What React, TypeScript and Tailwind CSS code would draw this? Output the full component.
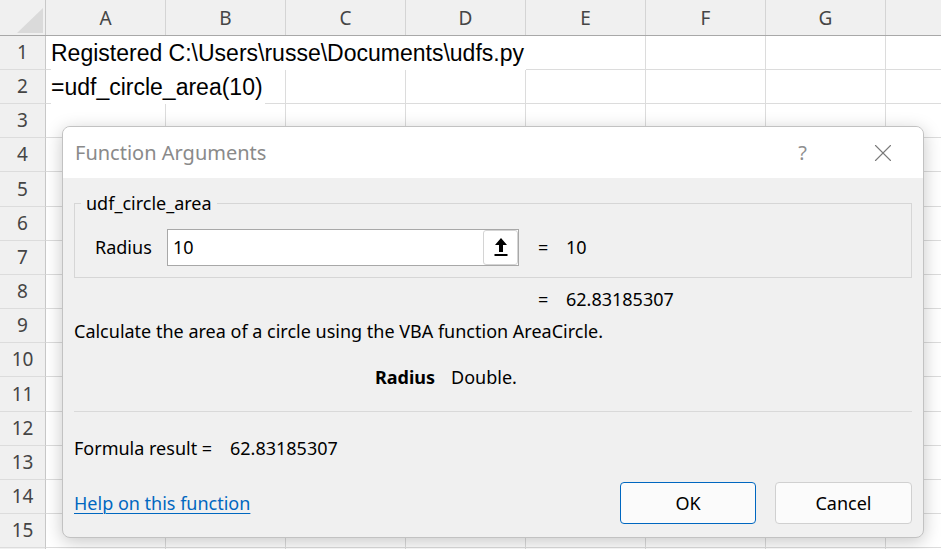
import { X } from 'lucide-react';

const COLS = ['A', 'B', 'C', 'D', 'E', 'F', 'G', ''];
const ROWS = Array.from({ length: 16 }, (_, i) => i + 1);

const CELLS: Record<number, string> = {
    1: 'Registered C:\\Users\\russe\\Documents\\udfs.py',
    2: '=udf_circle_area(10)',
};

function UploadIcon() {
    return (
        <svg width="14" height="19" viewBox="0 0 14 19">
            <path d="M7 0 L13 7 L9 7 L9 14 L5 14 L5 7 L1 7 Z" fill="#000" />
            <rect x="0.5" y="16" width="13" height="2" fill="#000" />
        </svg>
    );
}

function Sheet() {
    return (
        <div className="flex flex-col font-['Liberation_Sans',Arial,sans-serif]">
            {/* Column header */}
            <div className="flex h-[36px] bg-[#f0f0f0] border-b border-[#a8a8a8] shrink-0">
                <div className="w-[46px] shrink-0 border-r border-[#c8c8c8] relative">
                    <svg className="absolute left-0 top-0" width="46" height="36">
                        <polygon points="17,33 43,33 43,8" fill="#dadada" />
                    </svg>
                </div>
                {COLS.map((c, i) => (
                    <div
                        key={i}
                        className="w-[120px] shrink-0 border-r border-[#d4d4d4] flex items-center justify-center text-[19px] text-[#454545] font-['Noto_Sans',sans-serif] pt-[1px]"
                    >
                        {c}
                    </div>
                ))}
            </div>
            {ROWS.map(r => (
                <div key={r} className={`flex shrink-0 ${r === 5 || r === 11 ? 'h-[35px]' : 'h-[34px]'}`}>
                    <div className="w-[46px] shrink-0 bg-[#f0f0f0] border-r border-[#c8c8c8] border-b border-b-[#dcdcdc] flex items-center justify-center text-[19px] text-[#454545] font-['Noto_Sans',sans-serif]">
                        {r < 16 ? r : ''}
                    </div>
                    <div className="relative flex">
                        {COLS.map((c, i) => (
                            <div
                                key={i}
                                className={`w-[120px] shrink-0 border-b border-[#dcdcdc] ${i === 0 && CELLS[r] ? '' : 'border-r border-r-[#dcdcdc]'}`}
                            />
                        ))}
                        {CELLS[r] && (
                            <span className="absolute left-[5px] top-0 h-[34px] flex items-center whitespace-nowrap text-[23px] text-black bg-white pr-[2px]">
                                {CELLS[r]}
                            </span>
                        )}
                    </div>
                </div>
            ))}
        </div>
    );
}

function FunctionArguments() {
    return (
        <div className="absolute left-[62px] top-[126px] w-[862px] h-[412px] rounded-[8px] border border-[#c2c2c2] bg-[#f0f0f0] shadow-[0_4px_18px_rgba(0,0,0,0.22)] overflow-hidden flex flex-col font-['Noto_Sans',sans-serif] text-[18px] text-black">
            {/* Title bar */}
            <div className="h-[51px] bg-white flex items-center shrink-0">
                <span className="ml-[12px] text-[20px] text-[#8a8a8a]">Function Arguments</span>
                <span className="ml-auto text-[20px] text-[#8f8f8f] mr-[61px]">?</span>
                <X className="w-[30px] h-[30px] text-[#7a7a7a] mr-[25px]" strokeWidth={0.9} />
            </div>

            <div className="flex flex-col px-[11px]">
                {/* Group box */}
                <div className="relative mt-[25px] h-[75px] border border-[#d6d6d6] flex items-start pt-[25px]">
                    <span className="absolute left-[6px] -top-[13px] px-[5px] bg-[#f0f0f0] leading-[24px]">
                        udf_circle_area
                    </span>
                    <span className="w-[92px] pl-[20px] h-[37px] flex items-center">Radius</span>
                    <div className="w-[352px] h-[37px] border border-[#a8a8a8] bg-white flex items-center">
                        <span className="pl-[5px] flex-1">10</span>
                        <div className="w-[35px] h-[35px] rounded-[3px] border border-[#d4d4d4] bg-white flex items-center justify-center">
                            <UploadIcon />
                        </div>
                    </div>
                    <span className="ml-[19px] h-[37px] flex items-center w-[28px]">=</span>
                    <span className="h-[37px] flex items-center">10</span>
                </div>

                <div className="flex mt-[9px] leading-[24px] pl-[464px]">
                    <span className="w-[28px]">=</span>
                    <span>62.83185307</span>
                </div>

                <div className="mt-[8px] leading-[24px]">
                    Calculate the area of a circle using the VBA function AreaCircle.
                </div>

                <div className="mt-[22px] leading-[24px] pl-[301px] flex gap-[16px]">
                    <span className="font-bold">Radius</span>
                    <span>Double.</span>
                </div>

                <div className="mt-[22px] h-px bg-[#d9d9d9]" />

                <div className="mt-[24px] leading-[24px] flex">
                    <span className="w-[156px]">Formula result =</span>
                    <span>62.83185307</span>
                </div>

                <div className="mt-[22px] flex items-center">
                    <a className="text-[#0067c0] underline underline-offset-[3px] decoration-1">
                        Help on this function
                    </a>
                    <div className="ml-auto flex gap-[19px]">
                        <button className="w-[136px] h-[42px] rounded-[4px] border border-[#0067c0] bg-[#fbfbfb] text-[18px]">
                            OK
                        </button>
                        <button className="w-[137px] h-[42px] rounded-[4px] border border-[#d0d0d0] bg-[#fbfbfb] text-[18px]">
                            Cancel
                        </button>
                    </div>
                </div>
            </div>
        </div>
    );
}

export default function App() {
    return (
        <div className="relative w-[941px] h-[549px] overflow-hidden bg-white">
            <Sheet />
            <FunctionArguments />
        </div>
    );
}
